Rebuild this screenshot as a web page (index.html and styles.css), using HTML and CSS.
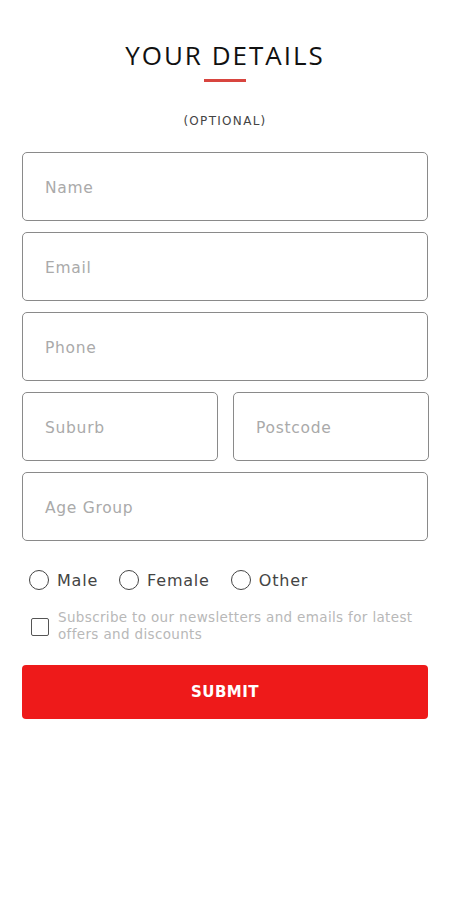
FILE: index.html
```html
<!DOCTYPE html>
<html>
<head>
<meta charset="utf-8">
<link rel="stylesheet" href="styles.css">
</head>
<body>
<div class="page">
  <h1 class="title">YOUR DETAILS</h1>
  <div class="underline"></div>
  <div class="optional">(OPTIONAL)</div>
  <form class="form">
    <div class="field">Name</div>
    <div class="field">Email</div>
    <div class="field">Phone</div>
    <div class="row">
      <div class="field">Suburb</div>
      <div class="field">Postcode</div>
    </div>
    <div class="field">Age Group</div>
    <div class="radios">
      <label class="radio"><span class="circle"></span>Male</label>
      <label class="radio"><span class="circle"></span>Female</label>
      <label class="radio"><span class="circle"></span>Other</label>
    </div>
    <label class="subscribe"><span class="box"></span><span class="subtext">Subscribe to our newsletters and emails for latest offers and discounts</span></label>
    <div class="submit">SUBMIT</div>
  </form>
</div>
</body>
</html>
```
FILE: styles.css
```css
* { box-sizing: border-box; }
html, body { margin: 0; padding: 0; background: #fff; }
body { font-family: "DejaVu Sans", "Open Sans", sans-serif; color: #222; }
.page { width: 450px; padding: 0 22px 0 22px; }
.title {
  margin: 40px 0 0 0;
  font-family: "Open Sans", "DejaVu Sans", sans-serif;
  font-size: 26px;
  font-weight: 400;
  text-align: center;
  letter-spacing: 2px;
  line-height: 30px;
  color: #111;
}
.underline { width: 42px; height: 3px; background: #d8453f; margin: 9px auto 0; }
.optional { text-align: center; font-size: 12px; margin-top: 32px; color: #444; letter-spacing: 1.3px; }
.form { display: flex; flex-direction: column; gap: 11px; margin-top: 24px; }
.field {
  height: 69px; border: 1px solid #8a8a8a; border-radius: 5px;
  display: flex; align-items: center; padding-left: 22px; padding-top: 2px;
  font-size: 15.5px; color: #aaa; letter-spacing: 0.7px;
}
.row { display: grid; grid-template-columns: 196px 196px; gap: 15px; }
.radios { display: flex; gap: 21px; margin-top: 18px; padding-left: 7px; font-size: 16px; color: #444; letter-spacing: 0.8px; }
.radio { display: flex; align-items: center; gap: 8px; }
.circle { width: 20px; height: 20px; border: 1.6px solid #444; border-radius: 50%; }
.subscribe { display: flex; align-items: flex-start; gap: 9px; padding-left: 9px; margin-top: 8px; }
.box { width: 18px; height: 18px; border: 1.6px solid #555; border-radius: 2px; flex: none; margin-top: 9px; }
.subtext { font-size: 13.5px; line-height: 17px; color: #b8b8b8; letter-spacing: 0.35px; }
.submit {
  height: 54px; background: #ee1a1a; border-radius: 4px; color: #fff;
  display: flex; align-items: center; justify-content: center;
  font-size: 15px; font-weight: bold; letter-spacing: 0.5px; margin-top: 11px;
}
```
